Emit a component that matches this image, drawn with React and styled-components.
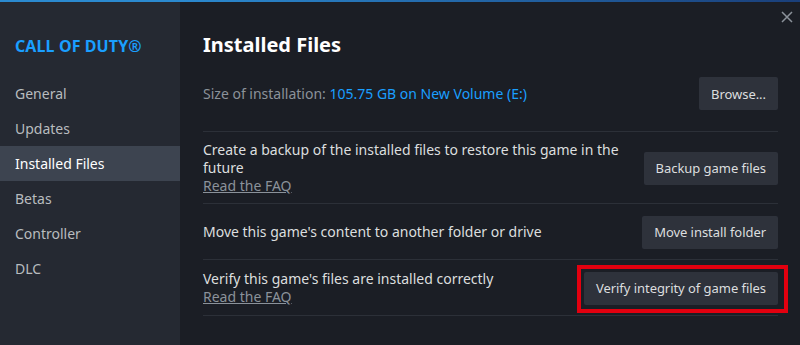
import React from 'react'
import styled, { createGlobalStyle } from 'styled-components'

const GlobalStyle = createGlobalStyle`
  html, body {
    margin: 0;
    padding: 0;
    background: #1b1e25;
  }
  * {
    box-sizing: border-box;
  }
`

const Window = styled.div`
  position: relative;
  display: flex;
  width: 800px;
  height: 345px;
  overflow: hidden;
  font-family: "Noto Sans", "Open Sans", sans-serif;
  background: #1b1e25;
  border-top: 2px solid #1f5d99;
  border-image: linear-gradient(90deg, #2b8ad0 0%, #2b8ad0 22%, #1a3f7a 100%) 1;
`

const Sidebar = styled.aside`
  width: 180px;
  flex-shrink: 0;
  background: #252932;
  padding-top: 33px;
`

const GameTitle = styled.h1`
  margin: 0 0 19px 15px;
  font-size: 16px;
  line-height: 22px;
  font-weight: 700;
  color: #1a9fff;
  letter-spacing: 0.1px;
`

const NavItem = styled.div`
  height: 35px;
  display: flex;
  align-items: center;
  padding-left: 15px;
  font-size: 14px;
  color: ${props => props.active ? '#ffffff' : '#b8bcbf'};
  background: ${props => props.active ? '#3d4450' : 'transparent'};
`

const Main = styled.main`
  flex: 1;
  padding: 29px 22px 0 23px;
`

const CloseButton = styled.button`
  position: absolute;
  top: 8px;
  right: 6px;
  width: 14px;
  height: 14px;
  padding: 0;
  border: none;
  background: none;
  display: flex;
  align-items: center;
  justify-content: center;
`

const Heading = styled.h2`
  margin: 0 0 18px;
  font-size: 20px;
  line-height: 28px;
  font-weight: 700;
  color: #ffffff;
`

const SizeRow = styled.div`
  display: flex;
  align-items: center;
  justify-content: space-between;
  padding-bottom: 21px;
  border-bottom: 1px solid #2c3038;
  font-size: 14px;
  color: #8b929a;
`

const SizeValue = styled.span`
  color: #1a9fff;
`

const Row = styled.div`
  display: flex;
  align-items: center;
  justify-content: space-between;
  gap: 20px;
  min-height: 56px;
  padding: 9px 0 8px;
  border-bottom: 1px solid #2c3038;
`

const RowText = styled.div`
  flex: 1;
  font-size: 14px;
  line-height: 18px;
  color: #dcdedf;
  max-width: 420px;
`

const FaqLink = styled.a`
  display: block;
  color: #8b929a;
  text-decoration: underline;
  font-size: 14px;
  line-height: 18px;
`

const Button = styled.button`
  position: relative;
  height: 33px;
  padding: 0 12px;
  border: none;
  border-radius: 2px;
  background: #2e323b;
  color: #dcdedf;
  font-family: inherit;
  font-size: 13px;
  letter-spacing: -0.05px;
  white-space: nowrap;
  flex-shrink: 0;
`

const Highlight = styled.span`
  position: absolute;
  top: -7px;
  bottom: -8px;
  left: -7px;
  right: -10px;
  border: 4px solid #e3000f;
  pointer-events: none;
`

const navItems = ['General', 'Updates', 'Installed Files', 'Betas', 'Controller', 'DLC']

const rows = [
  {
    text: 'Create a backup of the installed files to restore this game in the future',
    faq: true,
    button: 'Backup game files',
  },
  {
    text: "Move this game's content to another folder or drive",
    button: 'Move install folder',
  },
  {
    text: "Verify this game's files are installed correctly",
    faq: true,
    button: 'Verify integrity of game files',
    highlight: true,
  },
]

export default function App() {
  return (
    <>
      <GlobalStyle />
      <Window>
        <Sidebar>
          <GameTitle>CALL OF DUTY®</GameTitle>
          {navItems.map(item => (
            <NavItem key={item} active={item === 'Installed Files'}>{item}</NavItem>
          ))}
        </Sidebar>
        <Main>
          <Heading>Installed Files</Heading>
          <SizeRow>
            <span>
              Size of installation: <SizeValue>105.75 GB on New Volume (E:)</SizeValue>
            </span>
            <Button>Browse...</Button>
          </SizeRow>
          {rows.map(row => (
            <Row key={row.button}>
              <RowText>
                {row.text}
                {row.faq && <FaqLink>Read the FAQ</FaqLink>}
              </RowText>
              <Button>
                {row.button}
                {row.highlight && <Highlight />}
              </Button>
            </Row>
          ))}
        </Main>
        <CloseButton aria-label="Close">
          <svg width="12" height="12" viewBox="0 0 12 12">
            <path d="M1 1L11 11M11 1L1 11" stroke="#8b929a" strokeWidth="1.5" />
          </svg>
        </CloseButton>
      </Window>
    </>
  )
}
